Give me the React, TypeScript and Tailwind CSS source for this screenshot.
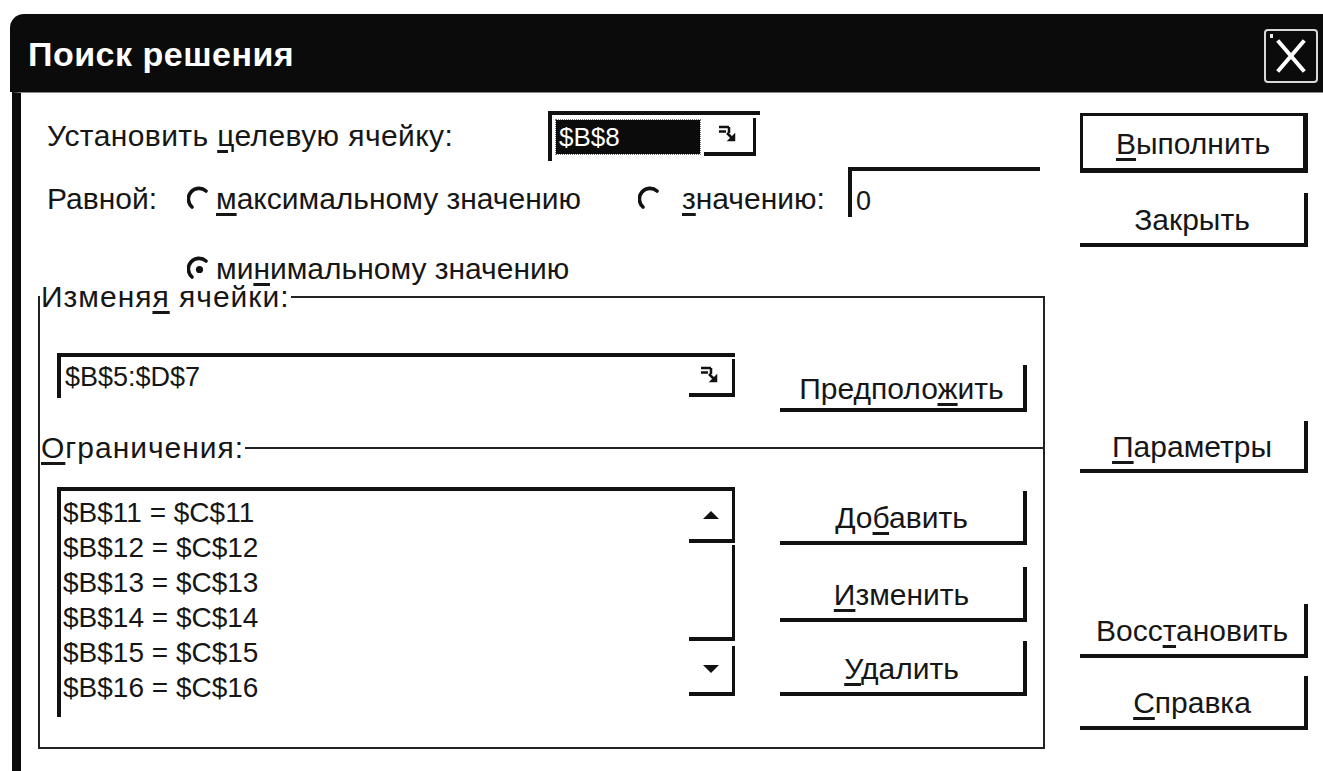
import React from 'react';

// Solver parameters dialog, classic Windows style, drawn in black and white

const RefIcon = () => (
  <svg width="26" height="22" viewBox="0 0 26 22" fill="none" stroke="#111" strokeWidth="2.5">
    <path d="M3 3H13M3 7.5H10M13 3V9" />
    <path d="M11 9L17 15" />
    <path d="M18.5 10.5V16.5H12.5Z" fill="#111" strokeWidth="1.5" />
  </svg>
);

const RefButton = ({ className = '' }: { className?: string }) => (
  <div className={`flex items-center justify-center border-r-[3px] border-b-[4px] border-[#111] ${className}`}>
    <RefIcon />
  </div>
);

const Radio = ({ checked = false }: { checked?: boolean }) => (
  <svg width="24" height="26" viewBox="0 0 24 26" fill="none">
    <path d="M5 21A10 10 0 0 1 19 5" stroke="#111" strokeWidth="3.6" strokeLinecap="round" />
    {checked && <circle cx="12.5" cy="13.5" r="3.6" fill="#111" />}
  </svg>
);

const Btn = ({ children, className = '' }: { children: React.ReactNode; className?: string }) => (
  <div className={`flex items-center justify-center border-r-[4px] border-b-[4px] border-[#111] ${className}`}>
    <span className="pt-[4px]">{children}</span>
  </div>
);

const Arrow = ({ up }: { up?: boolean }) => (
  <svg width="18" height="10" viewBox="0 0 18 10">
    <polygon points={up ? '9,1 17,9 1,9' : '1,1 17,1 9,9'} fill="#111" />
  </svg>
);

const constraints = [
  '$B$11 = $C$11',
  '$B$12 = $C$12',
  '$B$13 = $C$13',
  '$B$14 = $C$14',
  '$B$15 = $C$15',
  '$B$16 = $C$16',
];

export default function App() {
  return (
    <div className="h-[771px] w-[1323px] overflow-hidden bg-white pl-[10px] pt-[14px] font-['Liberation_Sans',Arial,sans-serif] text-[30px] leading-none text-[#161616]">
      {/* title bar */}
      <div className="flex h-[78px] items-center justify-between rounded-tl-[14px] bg-[#0b0b0b] pl-[18px] pr-[5px]">
        <span className="pt-[2px] text-[34px] font-bold tracking-[0.5px] text-white">Поиск решения</span>
        <div className="relative mt-[5px] flex h-[54px] w-[54px] items-center justify-center rounded-[4px] border-[2px] border-[#d8d8d8]">
          <span className="absolute left-[4px] top-[3px] h-[4px] w-[3px] bg-[#e8e8e8]" />
          <svg width="34" height="36" viewBox="0 0 34 36" stroke="#fff" strokeWidth="4" strokeLinecap="square">
            <path d="M5 4L29 32M29 4L5 32" />
          </svg>
        </div>
      </div>

      {/* body */}
      <div className="ml-[2px] flex h-[679px] border-l-[9px] border-t-[1px] border-l-[#0b0b0b] border-t-[#8a8a8a]">
        <div className="w-[1024px] pt-[18px]">
          {/* target cell */}
          <div className="flex h-[50px] items-center pl-[26px]">
            <span className="w-[501px] tracking-[0.4px]">
              Установить <u className="underline-offset-[4px]">ц</u>елевую ячейку:
            </span>
            <div className="flex h-[50px] w-[212px] border-l-[4px] border-t-[4px] border-[#111] pt-[3px]">
              <div className="ml-[4px] mt-[2px] flex h-[34px] w-[144px] items-center bg-[#0b0b0b] pl-[3px] text-[26px] text-white outline-dotted outline-1 outline-[#777]">
                $B$8
              </div>
              <RefButton className="ml-[4px] h-[38px] w-[52px]" />
            </div>
          </div>

          {/* equal to */}
          <div className="mt-[6px] flex h-[64px] pl-[26px]">
            <span className="w-[140px] self-center">Равной:</span>
            <div className="flex w-[451px] items-center gap-[5px]">
              <Radio />
              <span>
                <u className="underline-offset-[4px]">м</u>аксимальному значению
              </span>
            </div>
            <div className="flex w-[210px] items-center gap-[20px]">
              <Radio />
              <span>
                <u className="underline-offset-[4px]">з</u>начению:
              </span>
            </div>
            <div className="flex h-[50px] w-[192px] items-end border-l-[4px] border-t-[4px] border-[#111] pb-[2px] pl-[4px] text-[27px]">
              0
            </div>
          </div>

          <div className="mt-[23px] flex h-[30px] items-center gap-[5px] pl-[166px]">
            <Radio checked />
            <span>
              ми<u className="underline-offset-[4px]">н</u>имальному значению
            </span>
          </div>

          {/* changing cells */}
          <fieldset className="ml-[17px] mt-[2px] h-[164px] w-[1007px] border-l-[2px] border-r-[2px] border-t-[2px] border-[#222]">
            <legend className="h-[22px] px-[1px] leading-[22px] tracking-[1px]">
              Изменя<u className="underline-offset-[4px]">я</u> ячейки:
            </legend>
            <div className="ml-[17px] mt-[45px] flex items-start">
              <div className="flex h-[45px] w-[678px] justify-between border-l-[4px] border-t-[4px] border-[#111] text-[27px]">
                <span className="pl-[4px] pt-[7px]">$B$5:$D$7</span>
                <RefButton className="mt-[2px] h-[38px] w-[46px]" />
              </div>
              <Btn className="ml-[45px] mt-[12px] h-[47px] w-[247px]">
                Предполо<u className="underline-offset-[4px]">ж</u>ить
              </Btn>
            </div>
          </fieldset>

          {/* constraints */}
          <fieldset className="ml-[17px] mt-[-15px] h-[314px] w-[1007px] border-[2px] border-[#222]">
            <legend className="h-[26px] px-[1px] leading-[26px] tracking-[1px]">
              <u className="underline-offset-[4px]">О</u>граничения:
            </legend>
            <div className="ml-[17px] mt-[26px] flex items-start">
              <div className="flex h-[230px] w-[678px] border-l-[4px] border-t-[4px] border-[#111]">
                <ul className="flex-1 pl-[2px] pt-[4px] text-[28px] leading-[35px]">
                  {constraints.map((c) => (
                    <li key={c}>{c}</li>
                  ))}
                </ul>
                <div className="flex w-[46px] flex-col">
                  <div className="flex h-[52px] items-center justify-center border-b-[4px] border-r-[3px] border-[#111]">
                    <Arrow up />
                  </div>
                  <div className="mt-[2px] h-[96px] border-b-[4px] border-r-[3px] border-[#111]" />
                  <div className="mt-[5px] flex h-[50px] items-center justify-center border-b-[4px] border-r-[3px] border-[#111]">
                    <Arrow />
                  </div>
                </div>
              </div>
              <div className="ml-[45px] flex flex-col">
                <Btn className="mt-[4px] h-[54px] w-[247px]">
                  До<u className="underline-offset-[4px]">б</u>авить
                </Btn>
                <Btn className="mt-[22px] h-[55px] w-[247px]">
                  <u className="underline-offset-[4px]">И</u>зменить
                </Btn>
                <Btn className="mt-[19px] h-[55px] w-[247px]">
                  <u className="underline-offset-[4px]">У</u>далить
                </Btn>
              </div>
            </div>
          </fieldset>
        </div>

        {/* dialog commands */}
        <div className="ml-[35px] flex w-[228px] flex-col">
          <div className="mt-[20px] flex h-[60px] items-center justify-center border-[3px] border-b-[5px] border-r-[5px] border-[#111]">
            <span className="pt-[4px]">
              <u className="underline-offset-[4px]">В</u>ыполнить
            </span>
          </div>
          <Btn className="mt-[20px] h-[54px]">Закрыть</Btn>
          <Btn className="mt-[174px] h-[52px]">
            <u className="underline-offset-[4px]">П</u>араметры
          </Btn>
          <Btn className="mt-[131px] h-[54px]">
            Восс<u className="underline-offset-[4px]">т</u>ановить
          </Btn>
          <Btn className="mt-[18px] h-[54px]">
            <u className="underline-offset-[4px]">С</u>правка
          </Btn>
        </div>
      </div>
    </div>
  );
}
